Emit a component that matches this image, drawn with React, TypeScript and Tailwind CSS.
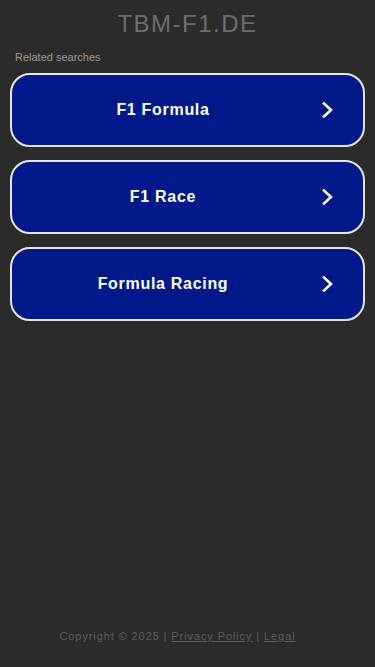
import React from "react";

const items = ["F1 Formula", "F1 Race", "Formula Racing"];

function Chevron() {
  return (
    <svg width="16" height="18" viewBox="0 0 16 18" fill="none" className="shrink-0">
      <path d="M4 2.5 L11 9 L4 15.5" stroke="white" strokeWidth="2.6" strokeLinecap="square" strokeLinejoin="miter" />
    </svg>
  );
}

export default function App() {
  return (
    <div
      className="w-[375px] h-[667px] bg-[#2b2b2b] flex flex-col"
      style={{ fontFamily: '"Liberation Sans", Arial, sans-serif' }}
    >
      <div className="pt-[9px] text-center text-[24px] leading-[30px] tracking-[1.5px] text-[#6e6e6e]">
        TBM-F1.DE
      </div>
      <div className="mt-[11px] px-[15px] text-[11px] leading-[14px] text-[#9a9a9a]">
        Related searches
      </div>
      <div className="mt-[9px] px-[10px] flex flex-col gap-[13px]">
        {items.map((t) => (
          <div
            key={t}
            className="h-[74px] rounded-[20px] border-2 border-[#e6e6e6] bg-[#00198a] flex items-center pr-[27px]"
          >
            <span className="flex-1 pr-[6px] text-center text-white font-bold text-[16px] tracking-[0.7px]">{t}</span>
            <Chevron />
          </div>
        ))}
      </div>
      <div className="flex-1" />
      <div className="pb-[24px] pr-[20px] text-center text-[11px] leading-[14px] tracking-[0.9px] text-[#5f5f5f]">
        Copyright © 2025 | <span className="underline">Privacy Policy</span> | <span className="underline">Legal</span>
      </div>
    </div>
  );
}
